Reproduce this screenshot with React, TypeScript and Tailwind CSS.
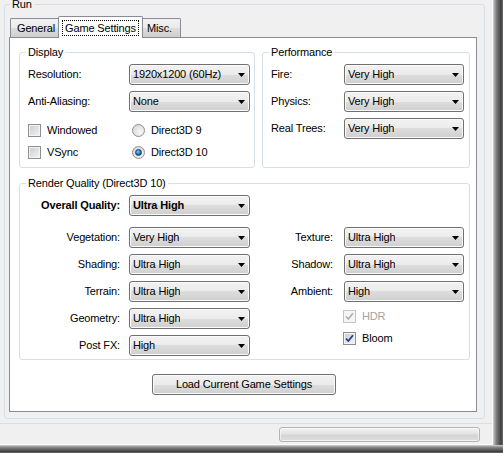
import type { ReactNode } from 'react'

const face = 'bg-[linear-gradient(to_bottom,#f2f2f2,#ebebeb_50%,#dddddd_50%,#cfcfcf)]'

function Arrow() {
  return (
    <svg width="7" height="4" viewBox="0 0 7 4" className="shrink-0">
      <path d="M0 0h7L3.5 4z" fill="#000" />
    </svg>
  )
}

function Combo({ value, width, bold }: { value: string; width: string; bold?: boolean }) {
  return (
    <div
      className={`${width} ${face} flex h-[21px] shrink-0 items-center justify-between rounded-[3px] border border-[#707070] pr-[4px] pl-[3px] shadow-[inset_0_0_0_1px_#fbfbfb] ${bold ? 'font-bold' : ''}`}
    >
      <span className="truncate">{value}</span>
      <Arrow />
    </div>
  )
}

function Field({
  label,
  value,
  labelClass,
  comboWidth,
  className = '',
  bold,
}: {
  label: string
  value: string
  labelClass: string
  comboWidth: string
  className?: string
  bold?: boolean
}) {
  return (
    <div className={`flex h-[21px] items-center ${className}`}>
      <span className={`shrink-0 whitespace-nowrap ${labelClass}`}>{label}</span>
      <Combo value={value} width={comboWidth} bold={bold} />
    </div>
  )
}

function CheckBox({ checked, disabled }: { checked?: boolean; disabled?: boolean }) {
  return (
    <span
      className={`flex h-[13px] w-[13px] shrink-0 items-center justify-center border ${
        disabled
          ? 'border-[#c4c4c4] bg-[#f6f6f6]'
          : 'border-[#8e8f8f] bg-[linear-gradient(135deg,#c9ccd1,#f4f4f5)] shadow-[inset_0_0_0_1px_#f4f4f4]'
      }`}
    >
      {checked && (
        <svg width="11" height="11" viewBox="0 0 11 11">
          <path
            d="M2 5.5 4.3 8 9 2.2"
            fill="none"
            stroke={disabled ? '#b0b0b0' : '#22388e'}
            strokeWidth="1.7"
          />
        </svg>
      )}
    </span>
  )
}

function Radio({ checked }: { checked?: boolean }) {
  return (
    <span className="flex h-[13px] w-[13px] shrink-0 items-center justify-center rounded-full border border-[#8e8f8f] bg-[radial-gradient(circle_at_65%_65%,#f8f8f8,#d0d0d0)]">
      {checked && (
        <span className="h-[7px] w-[7px] rounded-full border border-[#10406e] bg-[radial-gradient(circle_at_40%_35%,#7fd2fa,#1f72ba_55%,#0f3d6a)]" />
      )}
    </span>
  )
}

function Group({
  title,
  indent = 'ml-[6px]',
  className = '',
  children,
}: {
  title: string
  indent?: string
  className?: string
  children: ReactNode
}) {
  return (
    <fieldset className={`min-w-0 rounded-[3px] border border-[#d5dfe5] ${className}`}>
      <legend className={`${indent} px-[2px] leading-[13px]`}>{title}</legend>
      {children}
    </fieldset>
  )
}

function Tabs() {
  return (
    <div className="flex h-[21px] items-end pl-[1px]">
      <div
        className={`${face} flex h-[19px] w-[48px] items-center rounded-tl-[2px] border-t border-l border-[#898c95] pl-[6px]`}
      >
        General
      </div>
      <div className="relative z-10 mb-[-1px] flex h-[22px] w-[85px] justify-center rounded-t-[2px] border-x border-t border-[#898c95] bg-white pt-[3px]">
        <span className="flex h-[16px] w-[77px] items-center justify-center border border-dotted border-black">
          Game Settings
        </span>
      </div>
      <div
        className={`${face} flex h-[19px] w-[38px] items-center rounded-tr-[2px] border-t border-r border-[#898c95] pl-[4px]`}
      >
        Misc.
      </div>
    </div>
  )
}

function Panel() {
  return (
    <div className="flex h-[375px] w-[468px] flex-col border border-[#898c95] bg-white pt-[8px] pr-[6px] pl-[9px]">
      <div className="flex gap-[7px]">
        <Group title="Display" className="w-[236px]">
          <div className="pt-[5px] pb-[6px] pl-[8px]">
            <Field label="Resolution:" value="1920x1200 (60Hz)" labelClass="w-[101px]" comboWidth="w-[121px]" />
            <Field
              label="Anti-Aliasing:"
              value="None"
              labelClass="w-[101px]"
              comboWidth="w-[121px]"
              className="mt-[6px]"
            />
            <div className="mt-[10px] flex h-[17px] items-center">
              <div className="flex w-[104px] items-center gap-[6px]">
                <CheckBox />
                Windowed
              </div>
              <div className="flex items-center gap-[6px]">
                <Radio />
                Direct3D 9
              </div>
            </div>
            <div className="mt-[5px] flex h-[17px] items-center">
              <div className="flex w-[104px] items-center gap-[6px]">
                <CheckBox />
                VSync
              </div>
              <div className="flex items-center gap-[6px]">
                <Radio checked />
                Direct3D 10
              </div>
            </div>
          </div>
        </Group>
        <Group title="Performance" className="w-[208px]">
          <div className="pt-[5px] pl-[8px]">
            <Field label="Fire:" value="Very High" labelClass="w-[73px]" comboWidth="w-[120px]" />
            <Field
              label="Physics:"
              value="Very High"
              labelClass="w-[73px]"
              comboWidth="w-[120px]"
              className="mt-[6px]"
            />
            <Field
              label="Real Trees:"
              value="Very High"
              labelClass="w-[73px]"
              comboWidth="w-[120px]"
              className="mt-[6px]"
            />
          </div>
        </Group>
      </div>

      <Group title="Render Quality (Direct3D 10)" className="mt-[9px]">
        <div className="flex pt-[5px] pb-[3px]">
          <div className="w-[230px]">
            <Field
              label="Overall Quality:"
              value="Ultra High"
              bold
              labelClass="mr-[9px] w-[100px] text-right font-bold"
              comboWidth="w-[121px]"
            />
            <Field
              label="Vegetation:"
              value="Very High"
              labelClass="mr-[9px] w-[100px] text-right"
              comboWidth="w-[121px]"
              className="mt-[11px]"
            />
            <Field
              label="Shading:"
              value="Ultra High"
              labelClass="mr-[9px] w-[100px] text-right"
              comboWidth="w-[121px]"
              className="mt-[6px]"
            />
            <Field
              label="Terrain:"
              value="Ultra High"
              labelClass="mr-[9px] w-[100px] text-right"
              comboWidth="w-[121px]"
              className="mt-[6px]"
            />
            <Field
              label="Geometry:"
              value="Ultra High"
              labelClass="mr-[9px] w-[100px] text-right"
              comboWidth="w-[121px]"
              className="mt-[6px]"
            />
            <Field
              label="Post FX:"
              value="High"
              labelClass="mr-[9px] w-[100px] text-right"
              comboWidth="w-[121px]"
              className="mt-[6px]"
            />
          </div>
          <div className="pt-[32px]">
            <Field label="Texture:" value="Ultra High" labelClass="mr-[11px] w-[83px] text-right" comboWidth="w-[120px]" />
            <Field
              label="Shadow:"
              value="Ultra High"
              labelClass="mr-[11px] w-[83px] text-right"
              comboWidth="w-[120px]"
              className="mt-[6px]"
            />
            <Field
              label="Ambient:"
              value="High"
              labelClass="mr-[11px] w-[83px] text-right"
              comboWidth="w-[120px]"
              className="mt-[6px]"
            />
            <div className="mt-[6px] flex h-[17px] items-center gap-[6px] pl-[93px] text-[#a3a3a3]">
              <CheckBox checked disabled />
              HDR
            </div>
            <div className="mt-[5px] flex h-[17px] items-center gap-[6px] pl-[93px]">
              <CheckBox checked />
              Bloom
            </div>
          </div>
        </div>
      </Group>

      <button
        type="button"
        className={`${face} mt-[14px] ml-[133px] flex h-[21px] w-[184px] items-center justify-center rounded-[3px] border border-[#707070] shadow-[inset_0_0_0_1px_#fbfbfb]`}
      >
        Load Current Game Settings
      </button>
    </div>
  )
}

export default function App() {
  return (
    <div className="flex h-[453px] w-[503px] flex-col overflow-hidden font-['Liberation_Sans',Arial,sans-serif] text-[11px] leading-[13px] tracking-[-0.15px] text-black">
      <div className="flex h-[445px] shrink-0">
        <div className="flex h-[445px] w-[493px] shrink-0 flex-col border-r border-b border-[#fafafa] bg-[#f0f0f0]">
          <fieldset className="mt-[-1px] ml-[4px] w-[481px] min-w-0 rounded-[3px] border border-[#d5dfe5]">
            <legend className="ml-[5px] px-[2px] leading-[11px]">Run</legend>
            <div className="pt-[6px] pr-[7px] pb-[6px] pl-[4px]">
              <Tabs />
              <Panel />
            </div>
          </fieldset>
          <div className="mt-[4px] flex-1 border-t border-[#dedede] pt-[3px] pl-[279px]">
            <div className="h-[15px] w-[201px] rounded-[3px] border border-[#b4b4b4] bg-[linear-gradient(to_bottom,#f4f4f4,#e3e3e3_45%,#d4d4d4_55%,#dfdfdf)] shadow-[inset_0_0_0_1px_rgba(255,255,255,0.55)]" />
          </div>
        </div>
        <div className="w-[10px] bg-[linear-gradient(to_right,#d6d6d6,#a9a9a9_15%,#7c7c7c_35%,#5e5e5e_60%,#3f3f3f_80%,#6d6d6d)]" />
      </div>
      <div className="h-[8px] shrink-0 bg-[linear-gradient(to_bottom,#d6d6d6,#a9a9a9_15%,#7c7c7c_35%,#5e5e5e_60%,#3f3f3f_80%,#6d6d6d)]" />
    </div>
  )
}
